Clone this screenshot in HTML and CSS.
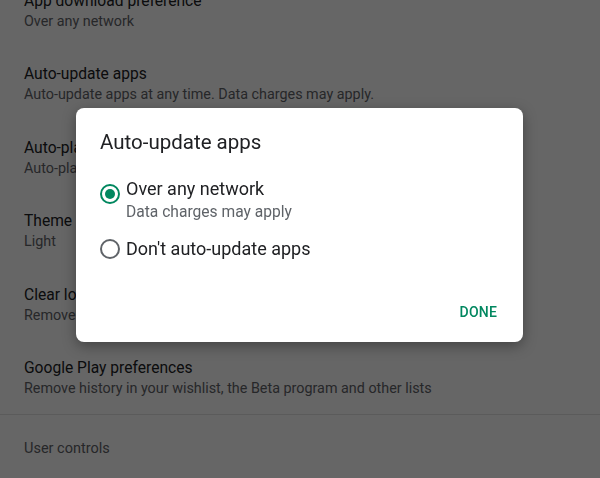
FILE: index.html
```html
<!DOCTYPE html>
<html>
<head>
<meta charset="utf-8">
<link rel="stylesheet" href="styles.css">
</head>
<body>
<div class="page">
  <div class="list">
    <div class="item"><div class="title">App download preference</div><div class="sub">Over any network</div></div>
    <div class="item"><div class="title">Auto-update apps</div><div class="sub">Auto-update apps at any time. Data charges may apply.</div></div>
    <div class="item"><div class="title">Auto-play videos</div><div class="sub">Auto-play videos over Wi-Fi only</div></div>
    <div class="item"><div class="title">Theme</div><div class="sub">Light</div></div>
    <div class="item"><div class="title">Clear local search history</div><div class="sub">Remove searches you have performed from this device</div></div>
    <div class="item"><div class="title">Google Play preferences</div><div class="sub">Remove history in your wishlist, the Beta program and other lists</div></div>
  </div>
  <div class="divider"></div>
  <div class="section">User controls</div>
</div>
<div class="scrim"></div>
<div class="dialog">
  <div class="dtitle">Auto-update apps</div>
  <div class="options">
    <div class="option">
      <span class="radio checked"><span class="dot"></span></span>
      <div class="otext"><div class="olabel">Over any network</div><div class="osub">Data charges may apply</div></div>
    </div>
    <div class="option second">
      <span class="radio"></span>
      <div class="otext"><div class="olabel">Don't auto-update apps</div></div>
    </div>
  </div>
  <div class="actions"><span class="done">DONE</span></div>
</div>
</body>
</html>
```
FILE: styles.css
```css
html, body {
  margin: 0;
  padding: 0;
  width: 600px;
  height: 478px;
  overflow: hidden;
  background: #fff;
  font-family: Roboto, "Noto Sans", sans-serif;
}
.page {
  margin-top: -9px;
}
.list {
  padding-left: 24px;
}
.item {
  height: 73.4px;
}
.title {
  font-size: 15.6px;
  line-height: 20px;
  color: #202124;
}
.sub {
  font-size: 14.35px;
  line-height: 20px;
  margin-top: 1px;
  color: #5f6368;
  white-space: nowrap;
}
.divider {
  height: 1px;
  background: #e4e4e4;
  margin-top: -17px;
}
.section {
  padding-left: 24px;
  margin-top: 24px;
  font-size: 14.5px;
  line-height: 20px;
  color: #5f6368;
}
.scrim {
  position: fixed;
  inset: 0;
  background: rgba(0, 0, 0, 0.6);
}
.dialog {
  position: absolute;
  left: 76px;
  top: 108px;
  width: 447px;
  height: 234px;
  background: #fff;
  border-radius: 8px;
  box-shadow: 0 4px 14px rgba(0, 0, 0, 0.35);
  box-sizing: border-box;
  padding: 22px 26px 0 24px;
  display: flex;
  flex-direction: column;
}
.dtitle {
  font-size: 20.5px;
  line-height: 24px;
  color: #202124;
}
.options {
  margin-top: 22px;
  display: flex;
  flex-direction: column;
}
.option {
  display: flex;
  align-items: flex-start;
}
.option.second {
  margin-top: 13px;
}
.radio {
  box-sizing: border-box;
  width: 20px;
  height: 20px;
  border: 2px solid #5f6368;
  border-radius: 50%;
  margin-top: 3px;
  display: flex;
  align-items: center;
  justify-content: center;
  flex: none;
}
.radio.checked {
  border-color: #01875f;
  margin-top: 8px;
}
.dot {
  width: 10px;
  height: 10px;
  border-radius: 50%;
  background: #01875f;
}
.otext {
  margin-left: 6px;
}
.olabel {
  font-size: 18px;
  line-height: 25px;
  color: #202124;
}
.osub {
  font-size: 15.6px;
  line-height: 22px;
  color: #5f6368;
}
.actions {
  margin-top: auto;
  margin-bottom: 20px;
  display: flex;
  justify-content: flex-end;
}
.done {
  font-size: 14px;
  font-weight: 500;
  letter-spacing: 0.2px;
  line-height: 20px;
  color: #01875f;
}
```
